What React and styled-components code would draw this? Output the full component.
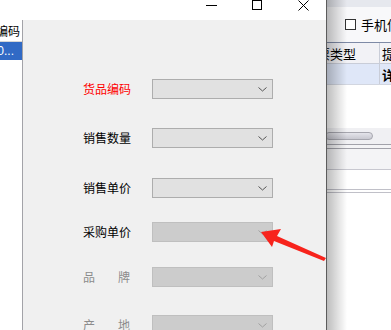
import styled, { createGlobalStyle } from 'styled-components'

const Global = createGlobalStyle`
  html, body {
    margin: 0;
    padding: 0;
    background: #ffffff;
    overflow: hidden;
  }
  body {
    font-family: "Noto Sans CJK SC", "Liberation Sans", sans-serif;
  }
`

const Screen = styled.div`
  position: relative;
  display: flex;
  width: 391px;
  height: 330px;
  overflow: hidden;
`

const Window = styled.div`
  display: flex;
  flex-direction: column;
  width: 326px;
  flex-shrink: 0;
  border-right: 1px solid #5c5c5c;
`

const TitleBar = styled.div`
  display: flex;
  justify-content: flex-end;
  height: 20px;
  background: #ffffff;
`

const CaptionButton = styled.div`
  display: flex;
  justify-content: center;
  align-items: flex-start;
  width: 46px;
  height: 20px;
  svg {
    display: block;
  }
`

const WindowBody = styled.div`
  display: flex;
  flex: 1;
`

const LeftList = styled.div`
  display: flex;
  flex-direction: column;
  width: 22px;
  flex-shrink: 0;
  background: #ffffff;
  border-right: 1px solid #a3a3a8;
`

const ListHeader = styled.div`
  display: flex;
  justify-content: flex-end;
  align-items: center;
  height: 21px;
  padding-right: 2px;
  overflow: hidden;
  white-space: nowrap;
  font-size: 12px;
  color: #000;
  border-bottom: 1px solid #d6d6d6;
`

const ListRow = styled.div`
  display: flex;
  justify-content: flex-end;
  align-items: center;
  height: 18px;
  padding-right: 8px;
  overflow: hidden;
  white-space: nowrap;
  font-family: "Liberation Sans", sans-serif;
  font-size: 12px;
  color: #ffffff;
  background: ${(p) => (p.selected ? '#316ac5' : 'transparent')};
`

const Form = styled.div`
  display: flex;
  flex-direction: column;
  flex: 1;
  background: #f0f0f0;
  padding: 59px 0 0 60px;
`

const Row = styled.div`
  display: flex;
  align-items: center;
  gap: 22px;
  margin-top: ${(p) => p.top}px;
`

const Label = styled.div`
  display: flex;
  justify-content: space-between;
  width: 47px;
  font-size: 12px;
  line-height: 14px;
  white-space: nowrap;
  color: ${(p) => (p.required ? '#ff0000' : p.disabled ? '#8c8c8c' : '#000000')};
`

const Combo = styled.div`
  display: flex;
  justify-content: flex-end;
  align-items: center;
  box-sizing: border-box;
  width: 121px;
  height: 20px;
  padding-right: 5px;
  background: ${(p) => (p.disabled ? '#cccccc' : '#e1e1e1')};
  border: 1px solid ${(p) => (p.disabled ? '#bfbfbf' : '#adadad')};
  svg {
    display: block;
  }
`

const OtherApp = styled.div`
  position: relative;
  display: flex;
  flex-direction: column;
  flex: 1;
  background: #f8f8fa;
  overflow: hidden;
`

const TopBand = styled.div`
  height: 7px;
  background: #e6e8ee;
`

const CheckLine = styled.div`
  display: flex;
  align-items: center;
  gap: 5px;
  height: 36px;
  padding-left: 18px;
  white-space: nowrap;
  font-size: 13px;
  color: #000;
`

const CheckBox = styled.span`
  display: inline-block;
  flex-shrink: 0;
  width: 9px;
  height: 9px;
  border: 1px solid #333;
  background: #fff;
`

const GridHeader = styled.div`
  display: flex;
  height: 21px;
  border-top: 1px solid #7e8aa6;
  border-bottom: 1px solid #c9cdd8;
  background: #f2f2f6;
`

const GridRow = styled.div`
  display: flex;
  height: 20px;
  border-bottom: 1px solid #d2d6e0;
  background: #dfe7f8;
`

const Cell = styled.div`
  display: flex;
  align-items: center;
  justify-content: ${(p) => (p.first ? 'flex-end' : 'flex-start')};
  flex: ${(p) => (p.first ? '0 0 53px' : '1')};
  box-sizing: border-box;
  padding: ${(p) => (p.first ? '0 23px 0 0' : '0 0 0 2px')};
  border-right: ${(p) => (p.first ? '1px solid #c9cdd8' : 'none')};
  overflow: hidden;
  white-space: nowrap;
  font-size: 13px;
  font-weight: ${(p) => (p.bold ? 700 : 400)};
  color: #000;
`

const Blank = styled.div`
  height: ${(p) => p.h}px;
  background: ${(p) => p.bg || '#ffffff'};
  border-bottom: ${(p) => (p.line ? `1px solid ${p.line}` : 'none')};
`

const ScrollTrack = styled.div`
  display: flex;
  align-items: center;
  height: 17px;
  background: #f0f0f3;
  border-bottom: 1px solid #a2a2aa;
`

const Thumb = styled.div`
  width: 46px;
  height: 6px;
  margin-left: -2px;
  border: 1px solid #a6a6ae;
  border-radius: 4px;
  background: linear-gradient(#e4e4ea, #c8c8d0);
`

const Shadow = styled.div`
  position: absolute;
  top: 0;
  left: 0;
  bottom: 0;
  width: 20px;
  background: linear-gradient(to right, rgba(0, 0, 0, 0.26), rgba(0, 0, 0, 0));
  pointer-events: none;
`

const Overlay = styled.svg`
  position: absolute;
  top: 0;
  left: 0;
  pointer-events: none;
`

const Chevron = ({ disabled }) => (
  <svg width="9" height="5" viewBox="0 0 9 5">
    <path
      d="M0.5 0.5 L4.5 4 L8.5 0.5"
      fill="none"
      stroke={disabled ? '#a0a0a0' : '#555555'}
      strokeWidth="1"
    />
  </svg>
)

const fields = [
  { label: ['货品编码'], required: true, top: 0 },
  { label: ['销售数量'], top: 29 },
  { label: ['销售单价'], top: 30 },
  { label: ['采购单价'], top: 24, locked: true },
  { label: ['品', '牌'], top: 25, locked: true, disabled: true },
  { label: ['产', '地'], top: 28, locked: true, disabled: true },
]

export default function App() {
  return (
    <>
      <Global />
      <Screen>
        <Window>
          <TitleBar>
            <CaptionButton>
              <svg width="11" height="11" viewBox="0 0 11 11">
                <line x1="0" y1="5.5" x2="11" y2="5.5" stroke="#000" />
              </svg>
            </CaptionButton>
            <CaptionButton>
              <svg width="11" height="11" viewBox="0 0 11 11">
                <rect x="0.5" y="0.5" width="9" height="9" fill="none" stroke="#000" />
              </svg>
            </CaptionButton>
            <CaptionButton>
              <svg width="11" height="11" viewBox="0 0 11 11">
                <path d="M0.5 0.5 L10.5 10.5 M10.5 0.5 L0.5 10.5" stroke="#000" />
              </svg>
            </CaptionButton>
          </TitleBar>
          <WindowBody>
            <LeftList>
              <ListHeader>货品编码</ListHeader>
              <ListRow selected>1000...</ListRow>
            </LeftList>
            <Form>
              {fields.map((f, i) => (
                <Row key={i} top={f.top}>
                  <Label required={f.required} disabled={f.disabled}>
                    {f.label.map((t, j) => (
                      <span key={j}>{t}</span>
                    ))}
                  </Label>
                  <Combo disabled={f.locked}>
                    <Chevron disabled={f.locked} />
                  </Combo>
                </Row>
              ))}
            </Form>
          </WindowBody>
        </Window>
        <OtherApp>
          <TopBand />
          <CheckLine>
            <CheckBox />
            手机信息
          </CheckLine>
          <GridHeader>
            <Cell first>发票类型</Cell>
            <Cell>提货</Cell>
          </GridHeader>
          <GridRow>
            <Cell first />
            <Cell bold>详细</Cell>
          </GridRow>
          <Blank h={44} />
          <ScrollTrack>
            <Thumb />
          </ScrollTrack>
          <Blank h={3} bg="#f4f4f6" line="#a2a2aa" />
          <Blank h={20} bg="#f4f4f6" line="#c8c8d0" />
          <Blank h={20} line="#c0c0c8" />
          <Blank h={2} line="#c0c0c8" />
          <Blank h={140} />
          <Shadow />
        </OtherApp>
        <Overlay width="391" height="330" viewBox="0 0 391 330">
          <polygon
            points="261,232 281,229 277,236 326,258 324,261 274,241 272,247"
            fill="#f7231c"
          />
        </Overlay>
      </Screen>
    </>
  )
}
